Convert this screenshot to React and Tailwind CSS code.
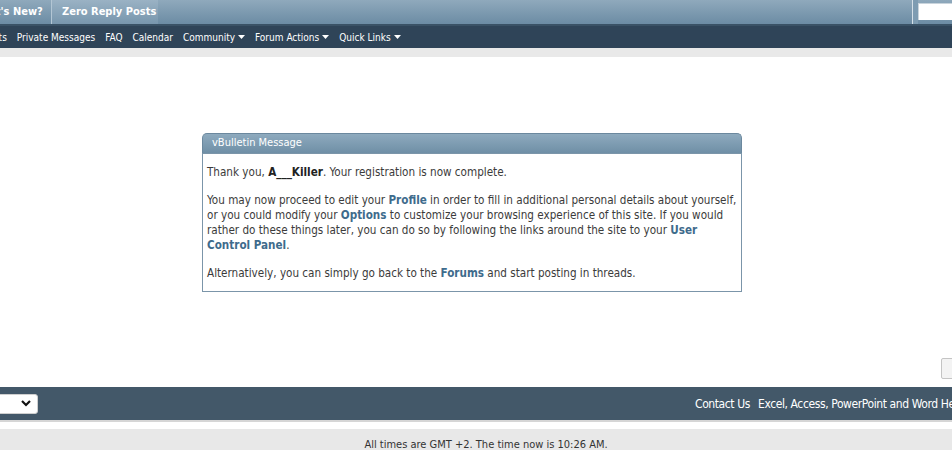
import React from "react";

const font = { fontFamily: '"DejaVu Sans Condensed", "DejaVu Sans", Tahoma, sans-serif' };

const navItems = [
  { label: "User Posts" },
  { label: "Private Messages" },
  { label: "FAQ" },
  { label: "Calendar" },
  { label: "Community", menu: true },
  { label: "Forum Actions", menu: true },
  { label: "Quick Links", menu: true },
];

const Caret = () => (
  <svg width="7" height="4" viewBox="0 0 7 4" className="ml-[3px] inline-block">
    <path d="M0 0h7L3.5 4z" fill="#ffffff" />
  </svg>
);

const Link = ({ children }) => (
  <span className="font-bold text-[#3e6b8c]">{children}</span>
);

const App = () => {
  return (
    <div
      className="relative w-[952px] h-[450px] overflow-hidden bg-white flex flex-col"
      style={font}
    >
      {/* tab bar */}
      <div className="h-[24px] shrink-0 flex bg-gradient-to-b from-[#8fa9bc] to-[#6c8ca4]">
        <div className="flex -ml-[37px]">
          <div className="w-[88px] flex items-center justify-center whitespace-nowrap text-[11px] font-bold text-white">
            What's New?
          </div>
          <div className="w-[107px] border-l border-[#b3c6d4] bg-gradient-to-b from-[#9ab2c4] to-[#7896ad] flex items-center pl-[10px] whitespace-nowrap text-[11px] font-bold text-white">
            Zero Reply Posts
          </div>
        </div>
        <div className="ml-auto flex items-start">
          <div className="w-[1px] h-[24px] bg-[#d5e0e8]" />
          <div className="w-[5px] h-[24px] bg-[#7e9cb2]" />
          <div className="mt-[3px] w-[34px] h-[17px] bg-white border-t border-l border-[#c9d4dc]" />
        </div>
      </div>

      {/* nav bar */}
      <div className="h-[24px] shrink-0 bg-[#2f4458] border-t-2 border-[#3a5266] flex items-center gap-[10px] -ml-[40px] text-[10px] text-white">
        {navItems.map((item) => (
          <span key={item.label} className="flex items-center whitespace-nowrap">
            {item.label}
            {item.menu && <Caret />}
          </span>
        ))}
      </div>

      <div className="h-[9px] shrink-0 bg-[#e9e9e9]" />

      {/* body */}
      <div className="relative flex-1 bg-white">
        <div className="ml-[202px] mt-[76px] w-[540px]">
          <div className="h-[20px] rounded-t-[5px] bg-gradient-to-b from-[#8eaabe] to-[#6f8fa6] border border-b-0 border-[#6b889e] flex items-center pl-[9px] text-[11px] text-white">
            vBulletin Message
          </div>
          <div className="border border-[#7b95a9] px-[4px] pt-[11px] pb-[10px] text-[11.6px] leading-[15px] text-[#3b3b3b]">
            <p>
              Thank you, <span className="font-bold text-[#222]">A___Killer</span>. Your
              registration is now complete.
            </p>
            <p className="mt-[13px]">
              You may now proceed to edit your <Link>Profile</Link> in order to fill in
              additional personal details about yourself, or you could modify your{" "}
              <Link>Options</Link> to customize your browsing experience of this site. If
              you would rather do these things later, you can do so by following the links
              around the site to your <Link>User Control Panel</Link>.
            </p>
            <p className="mt-[13px]">
              Alternatively, you can simply go back to the <Link>Forums</Link> and start
              posting in threads.
            </p>
          </div>
        </div>
        <div className="absolute left-[941px] top-[301px] w-[20px] h-[21px] border border-[#c4c4c4] rounded-[2px] bg-[#f3f3f3]" />
      </div>

      {/* footer */}
      <div className="h-[33px] shrink-0 bg-[#435869] flex items-center">
        <div className="shrink-0 -ml-[22px] w-[60px] h-[20px] bg-white rounded-[3px] border border-[#cfcfcf] flex items-center justify-end pr-[6px]">
          <svg width="10" height="7" viewBox="0 0 10 7">
            <path d="M1 1l4 4 4-4" fill="none" stroke="#111" strokeWidth="2.2" />
          </svg>
        </div>
        <div className="shrink-0 ml-[657px] flex gap-[8px] whitespace-nowrap text-[12px] tracking-[-0.4px] text-white">
          <span>Contact Us</span>
          <span>Excel, Access, PowerPoint and Word Help</span>
        </div>
      </div>
      <div className="h-[2px] shrink-0 bg-[#d6d6d6]" />
      <div className="h-[7px] shrink-0 bg-white" />
      <div className="h-[21px] shrink-0 bg-[#e8e8e8] flex items-start justify-center pt-[10px] pl-[20px] text-[11px] leading-[12px] text-[#333]">
        All times are GMT +2. The time now is 10:26 AM.
      </div>
    </div>
  );
};

export default App;
